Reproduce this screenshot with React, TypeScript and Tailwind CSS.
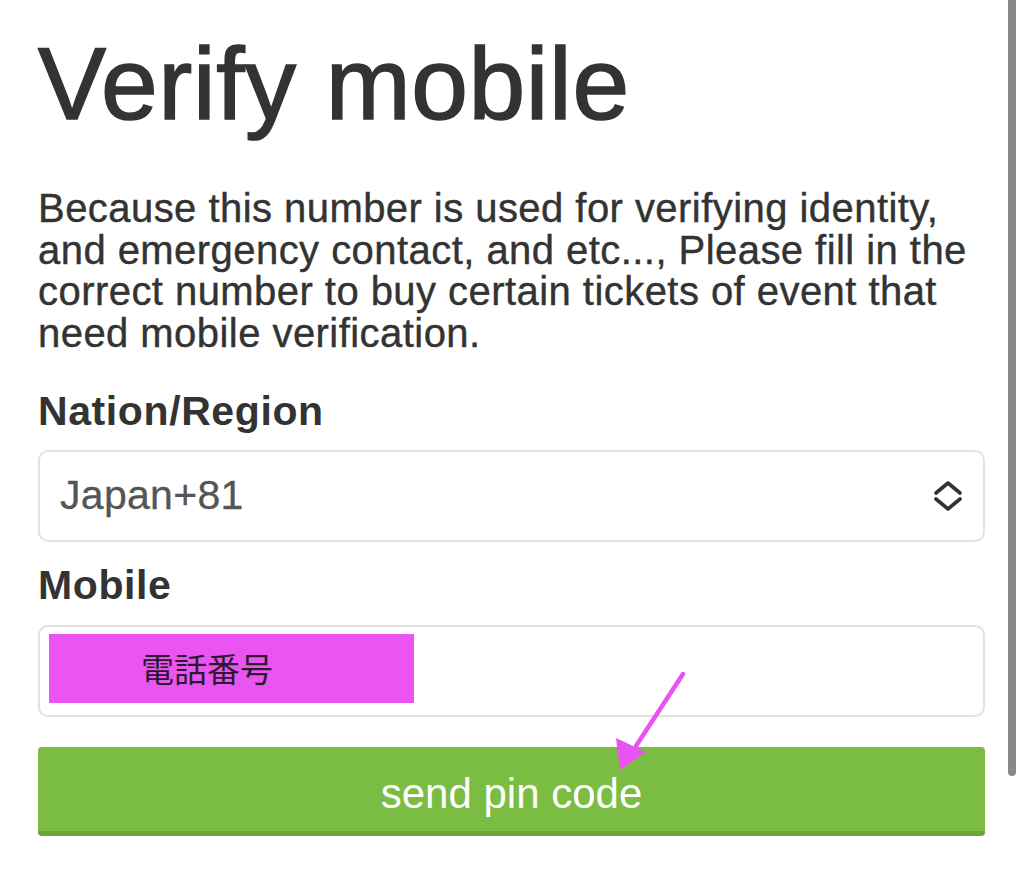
export default function App() {
  return (
    <div
      className="relative h-[869px] w-[1024px] overflow-hidden bg-white text-[#333]"
      style={{ fontFamily: '"Liberation Sans", Arial, "Noto Sans CJK JP", sans-serif' }}
    >
      <div className="w-[985px] pl-[38px] pt-[33px]">
        <h1 className="text-[102px] leading-none tracking-[0.6px] text-[#333] [-webkit-text-stroke:1.6px_#333]">
          Verify mobile
        </h1>

        <p className="mt-[53px] text-[40px] leading-[41.5px] tracking-[0.45px] text-[#333] [-webkit-text-stroke:0.4px_#333]">
          Because this number is used for verifying identity, and emergency contact, and etc..., Please fill in
          the correct number to buy certain tickets of event that need mobile verification.
        </p>

        <label className="mt-[33px] block text-[41px] font-bold leading-[48px] tracking-[0.6px]">Nation/Region</label>
        <div className="mt-[15px] flex h-[92px] items-center justify-between rounded-[10px] border-2 border-[#e2e2e2] pl-[20px] pr-[20px]">
          <span className="text-[41px] tracking-[0.3px] text-[#555] [-webkit-text-stroke:0.3px_#555]">Japan+81</span>
          <svg width="30" height="34" viewBox="0 0 30 34" fill="none" stroke="#333" strokeWidth="3.6" strokeLinecap="round" strokeLinejoin="round">
            <path d="M3 14 L15 4 L27 14" />
            <path d="M3 20 L15 30 L27 20" />
          </svg>
        </div>

        <label className="mt-[19px] block text-[41px] font-bold leading-[48px] tracking-[0.6px]">Mobile</label>
        <div className="mt-[16px] h-[92px] rounded-[10px] border-2 border-[#e2e2e2]">
          <div className="ml-[9px] mt-[7px] flex h-[69px] w-[365px] items-center bg-[#ea55f2] pl-[92px]">
            <span
              className="text-[33px] text-[#2a1a2c]"
              style={{ fontFamily: '"Noto Sans CJK JP", sans-serif' }}
            >
              電話番号
            </span>
          </div>
        </div>

        <button
          type="button"
          className="mt-[30px] flex h-[89px] w-full items-center justify-center rounded-[4px] border-b-[5px] border-[#69a638] bg-[#7bbc42] pt-[9px] text-[42px] text-white"
        >
          send pin code
        </button>
      </div>

      {/* annotation arrow */}
      <svg className="absolute left-0 top-0" width="1024" height="869" fill="none">
        <line x1="683" y1="674" x2="636" y2="746" stroke="#e853f1" strokeWidth="4.5" strokeLinecap="round" />
        <polygon points="620,770 616,738 646,752" fill="#e853f1" />
      </svg>

      {/* scroll indicator */}
      <div className="absolute right-[8px] top-0 h-[776px] w-[8px] rounded-b-full bg-[#888]" />
    </div>
  );
}
